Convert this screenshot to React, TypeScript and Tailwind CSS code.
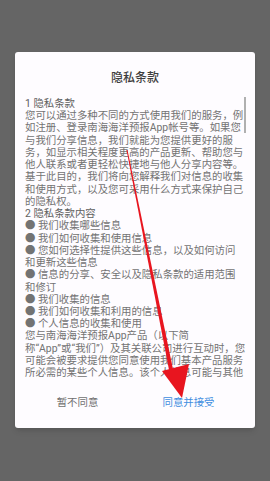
import React from 'react';

const lines = [
  '1 隐私条款',
  '您可以通过多种不同的方式使用我们的服务，例',
  '如注册、登录南海海洋预报App帐号等。如果您',
  '与我们分享信息，我们就能为您提供更好的服',
  '务，如显示相关程度更高的产品更新、帮助您与',
  '他人联系或者更轻松快捷地与他人分享内容等。',
  '基于此目的，我们将向您解释我们对信息的收集',
  '和使用方式，以及您可采用什么方式来保护自己',
  '的隐私权。',
  '2 隐私条款内容',
  '● 我们收集哪些信息',
  '● 我们如何收集和使用信息',
  '● 您如何选择性提供这些信息，以及如何访问',
  '和更新这些信息',
  '● 信息的分享、安全以及隐私条款的适用范围',
  '和修订',
  '● 我们收集的信息',
  '● 我们如何收集和利用的信息',
  '● 个人信息的收集和使用',
  '您与南海海洋预报App产品（以下简',
  '称“App”或“我们”）及其关联公司进行互动时，您',
  '可能会被要求提供您同意使用我们基本产品服务',
  '所必需的某些个人信息。该个人信息可能与其他',
];

const font = { fontFamily: 'Roboto, "Noto Sans CJK SC", sans-serif' };

export default function App() {
  return (
    <div className="relative w-[270px] h-[481px] bg-[#656565] overflow-hidden" style={font}>
      <div className="pt-[52px] px-[15px]">
        <div className="bg-[#fefcff] rounded-[3px] shadow-md h-[376px] flex flex-col">
          <div className="h-[45px] flex items-end justify-center pb-[10px] text-[12px] font-medium text-[#3e3e3e]">
            隐私条款
          </div>
          <div className="relative h-[282px] overflow-hidden pl-[10px] pt-[1px]">
            <div className="absolute right-[9px] top-0 w-[2px] h-[36px] bg-[#b0b0b0]" />
            {lines.map((l, i) => (
              <div
                key={i}
                className={`whitespace-nowrap text-[10.4px] leading-[12.23px] ${
                  i === 0 || i === 9 ? 'text-[#606060]' : 'text-[#737373]'
                }`}
              >
                {l}
              </div>
            ))}
          </div>
          <div className="flex-1 grid grid-cols-2 pl-[7px] pr-[11px] items-center text-[10.4px] pb-[1px]">
            <div className="text-center text-[#707070]">暂不同意</div>
            <div className="text-center text-[#3d8de0]">同意并接受</div>
          </div>
        </div>
      </div>
      <svg className="absolute left-0 top-0" width="270" height="481" viewBox="0 0 270 481">
        <polygon points="126.5,150 127.5,150 174,374 170,375" fill="#e8151f" />
        <polygon points="162,371 189,364 182,398" fill="#e8151f" />
      </svg>
    </div>
  );
}
